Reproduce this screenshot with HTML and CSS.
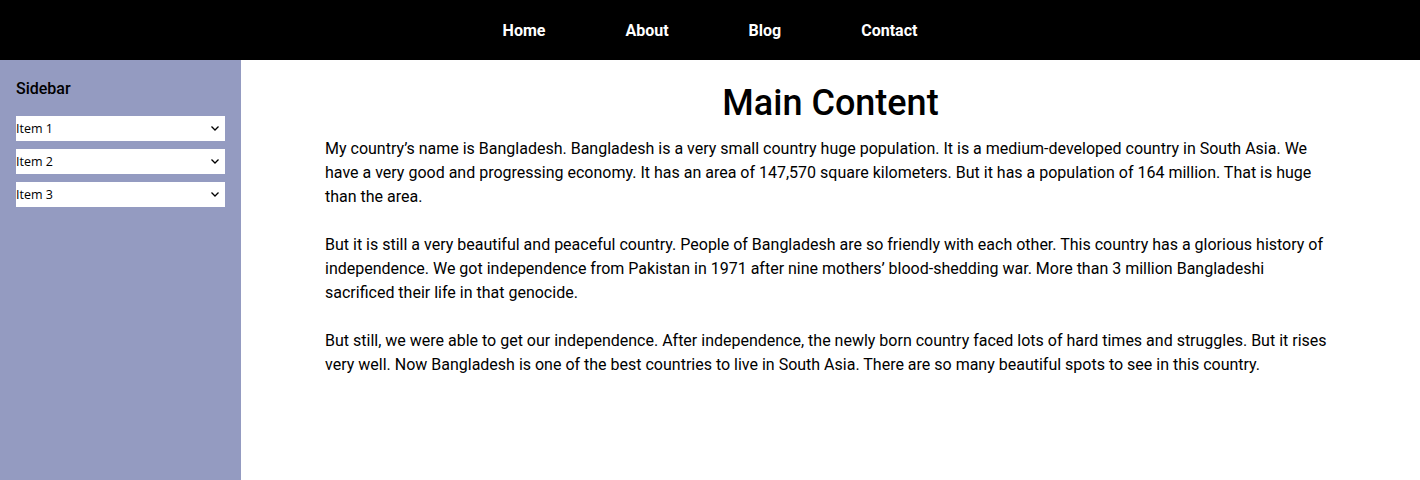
FILE: index.html
```html
<!DOCTYPE html>
<html lang="en">
<head>
<meta charset="utf-8">
<title>Bangladesh</title>
<link rel="stylesheet" href="styles.css">
</head>
<body>
<nav class="topnav">
  <a href="#">Home</a>
  <a href="#">About</a>
  <a href="#">Blog</a>
  <a href="#">Contact</a>
</nav>
<div class="layout">
  <aside class="sidebar">
    <h3 class="sidebar-title">Sidebar</h3>
    <div class="select-wrap">
      <select class="sidebar-select"><option>Item 1</option></select>
      <svg class="chevron" width="8" height="5" viewBox="0 0 8 5"><path d="M0.5 0.5 L4 4 L7.5 0.5" fill="none" stroke="#000" stroke-width="1.3"/></svg>
    </div>
    <div class="select-wrap">
      <select class="sidebar-select"><option>Item 2</option></select>
      <svg class="chevron" width="8" height="5" viewBox="0 0 8 5"><path d="M0.5 0.5 L4 4 L7.5 0.5" fill="none" stroke="#000" stroke-width="1.3"/></svg>
    </div>
    <div class="select-wrap">
      <select class="sidebar-select"><option>Item 3</option></select>
      <svg class="chevron" width="8" height="5" viewBox="0 0 8 5"><path d="M0.5 0.5 L4 4 L7.5 0.5" fill="none" stroke="#000" stroke-width="1.3"/></svg>
    </div>
  </aside>
  <main class="main">
    <h1 class="main-title">Main Content</h1>
    <p>My country’s name is Bangladesh. Bangladesh is a very small country huge population. It is a medium-developed country in South Asia. We have a very good and progressing economy. It has an area of 147,570 square kilometers. But it has a population of 164 million. That is huge than the area.</p>
    <p>But it is still a very beautiful and peaceful country. People of Bangladesh are so friendly with each other. This country has a glorious history of independence. We got independence from Pakistan in 1971 after nine mothers’ blood-shedding war. More than 3 million Bangladeshi sacrificed their life in that genocide.</p>
    <p>But still, we were able to get our independence. After independence, the newly born country faced lots of hard times and struggles. But it rises very well. Now Bangladesh is one of the best countries to live in South Asia. There are so many beautiful spots to see in this country.</p>
  </main>
</div>
</body>
</html>
```

FILE: styles.css
```css
html, body {
  margin: 0;
  padding: 0;
}
body {
  font-family: Roboto, "Liberation Sans", sans-serif;
  color: #000;
  background: #fff;
}
.topnav {
  height: 60px;
  background: #000;
  display: flex;
  justify-content: center;
  align-items: center;
  gap: 80px;
}
.topnav a {
  color: #fff;
  text-decoration: none;
  font-weight: 700;
  font-size: 16px;
}
.layout {
  display: flex;
  min-height: 100vh;
}
.sidebar {
  width: 241px;
  flex: 0 0 241px;
  box-sizing: border-box;
  background: #949bc1;
  padding: 19px 16px;
  display: flex;
  flex-direction: column;
  gap: 8px;
}
.sidebar-title {
  margin: 0 0 9px;
  font-size: 16px;
  font-weight: 500;
  line-height: 20px;
}
.select-wrap {
  position: relative;
  width: 209px;
  height: 25px;
}
.sidebar-select {
  -webkit-appearance: none;
  appearance: none;
  display: block;
  width: 209px;
  height: 25px;
  margin: 0;
  border: none;
  border-radius: 0;
  background: #fff;
  padding: 0;
  font-family: "Open Sans", sans-serif;
  font-size: 12.5px;
  color: #000;
}
.chevron {
  position: absolute;
  right: 6px;
  top: 10px;
  pointer-events: none;
}
.main {
  flex: 1;
  padding: 22px 84px 0;
}
.main-title {
  margin: 0 0 13px;
  text-align: center;
  font-size: 36px;
  font-weight: 500;
}
.main p {
  margin: 0 0 24px;
  font-size: 16px;
  line-height: 24px;
}
```
